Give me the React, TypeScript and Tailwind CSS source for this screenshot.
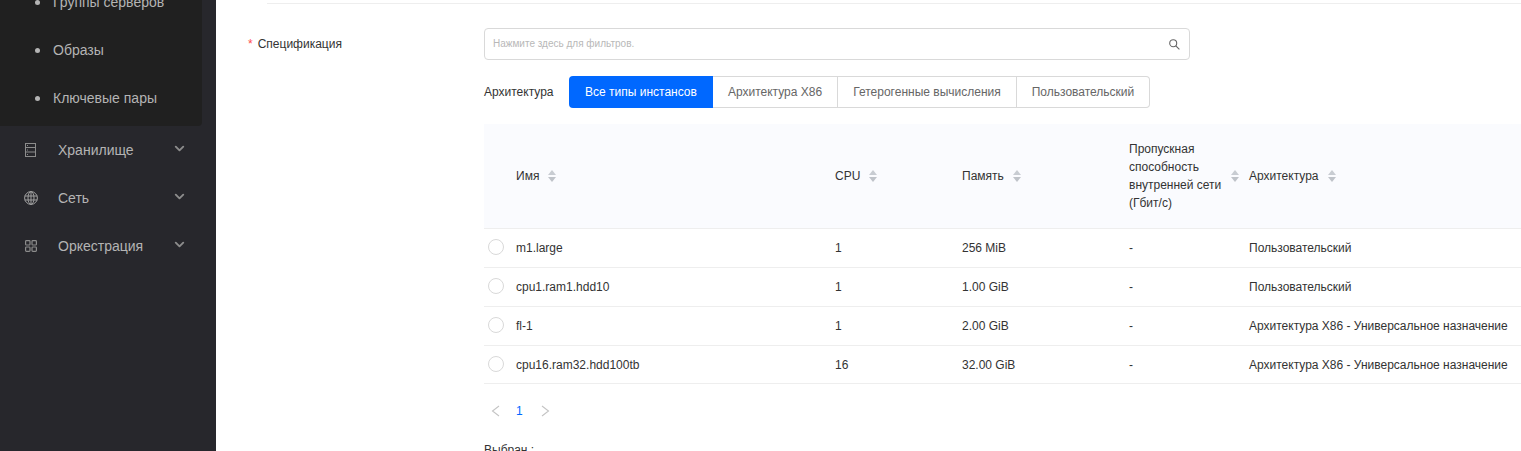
import { ChevronDown } from 'lucide-react';

const subItems = ['Группы серверов', 'Образы', 'Ключевые пары'];

const rows = [
  { name: 'm1.large', cpu: '1', mem: '256 MiB', net: '-', arch: 'Пользовательский', h: 'h-[39px]' },
  { name: 'cpu1.ram1.hdd10', cpu: '1', mem: '1.00 GiB', net: '-', arch: 'Пользовательский', h: 'h-[39px]' },
  { name: 'fl-1', cpu: '1', mem: '2.00 GiB', net: '-', arch: 'Архитектура X86 - Универсальное назначение', h: 'h-[39px]' },
  { name: 'cpu16.ram32.hdd100tb', cpu: '16', mem: '32.00 GiB', net: '-', arch: 'Архитектура X86 - Универсальное назначение', h: 'h-[38px]' },
];

const tabs = [
  { label: 'Архитектура X86', w: 'w-[125px]' },
  { label: 'Гетерогенные вычисления', w: 'w-[179px]' },
  { label: 'Пользовательский', w: 'w-[133px] rounded-r' },
];

function StorageIcon() {
  return (
    <svg width="14" height="14" viewBox="0 0 14 14" fill="none" stroke="#8c8c8c" strokeWidth="1">
      <rect x="1.5" y="0.5" width="10" height="13" />
      <path d="M1.5 4.5h10M1.5 9h10" />
      <path d="M3 2.5h1M3 7h1M3 11.5h1" />
    </svg>
  );
}

function GlobeIcon() {
  return (
    <svg width="14" height="14" viewBox="0 0 14 14" fill="none" stroke="#a0a0a0" strokeWidth="1">
      <circle cx="7" cy="7" r="6.4" />
      <ellipse cx="7" cy="7" rx="3" ry="6.4" />
      <path d="M7 0.6v12.8M0.8 5h12.4M0.8 9h12.4" />
    </svg>
  );
}

function GridIcon() {
  return (
    <svg width="14" height="14" viewBox="0 0 14 14" fill="none" stroke="#8c8c8c" strokeWidth="1.2">
      <rect x="1.6" y="1.6" width="4.4" height="4.4" rx="0.8" />
      <rect x="8" y="1.6" width="4.4" height="4.4" rx="0.8" />
      <rect x="1.6" y="8" width="4.4" height="4.4" rx="0.8" />
      <rect x="8" y="8" width="4.4" height="4.4" rx="0.8" />
    </svg>
  );
}

function SearchIcon() {
  return (
    <svg width="11" height="11" viewBox="0 0 11 11" fill="none" stroke="#666666" strokeWidth="1.1" className="shrink-0">
      <circle cx="4.2" cy="4.2" r="3.5" />
      <path d="M6.8 6.8l3.6 3.6" />
    </svg>
  );
}

function PageArrow({ dir }: { dir: 'left' | 'right' }) {
  return (
    <svg width="9" height="12" viewBox="0 0 9 12" fill="none" stroke="#c4c4c4" strokeWidth="1.1" className="shrink-0">
      <path d={dir === 'left' ? 'M8 1L1.5 6 8 11' : 'M1 1l6.5 5L1 11'} />
    </svg>
  );
}

function SortIcon() {
  return (
    <svg width="8" height="12" viewBox="0 0 8 12" className="shrink-0">
      <path d="M4 0l4 5H0z" fill="#c8ccd2" />
      <path d="M4 12L0 7h8z" fill="#bfc3c9" />
    </svg>
  );
}

function NavItem({ icon, label }: { icon: React.ReactNode; label: string }) {
  return (
    <div className="flex h-12 items-center text-sm text-[#b4b4b4]">
      <span className="w-[58px] pl-6">{icon}</span>
      <span className="flex-1">{label}</span>
      <ChevronDown className="mr-[29px] mb-1 h-[15px] w-[15px] text-[#8c8c8c]" strokeWidth={3} />
    </div>
  );
}

function HeaderCell({ label, className }: { label: string; className?: string }) {
  return (
    <div className={`flex items-center ${className ?? ''}`}>
      <span>{label}</span>
      <span className="ml-[9px]">
        <SortIcon />
      </span>
    </div>
  );
}

export default function App() {
  return (
    <div className="flex h-[451px] w-[1521px] overflow-hidden bg-white font-['Liberation_Sans',Arial,sans-serif] text-xs text-[#333333]">
      <aside className="h-full w-[216px] shrink-0 bg-[#27272c]">
        <div className="-mt-[22px] w-[202px] rounded-br bg-[#202020] pb-1">
          {subItems.map((item) => (
            <div key={item} className="flex h-12 items-center pl-[35px] text-sm text-[#b4b4b4]">
              <span className="mr-[13px] h-[5px] w-[5px] rounded-full bg-[#b4b4b4]" />
              {item}
            </div>
          ))}
        </div>
        <NavItem icon={<StorageIcon />} label="Хранилище" />
        <NavItem icon={<GlobeIcon />} label="Сеть" />
        <NavItem icon={<GridIcon />} label="Оркестрация" />
      </aside>

      <main className="min-w-0 flex-1">
        <div className="ml-[51px] mt-[3px] h-px bg-[#eeeeee]" />
        <div className="ml-[32px] mt-6 flex">
          <div className="flex h-8 w-[236px] shrink-0 items-center pb-[1px]">
            <span className="mr-[5px] text-[#ff4d4f]">*</span>
            <span>Спецификация</span>
          </div>

          <div className="min-w-0 flex-1">
            <div className="flex h-8 w-[706px] items-center justify-between rounded border border-[#d9d9d9] pl-2 pr-[9px] text-[10px] text-[#b8b8b8]">
              <span>Нажмите здесь для фильтров.</span>
              <SearchIcon />
            </div>

            <div className="mt-4 flex items-center">
              <span className="w-[85px]">Архитектура</span>
              <button className="flex h-8 w-[144px] items-center justify-center rounded-l bg-[#0068ff] text-white">
                Все типы инстансов
              </button>
              {tabs.map((tab) => (
                <button
                  key={tab.label}
                  className={`flex h-8 items-center justify-center border border-l-0 border-[#d9d9d9] text-[#666666] ${tab.w}`}
                >
                  {tab.label}
                </button>
              ))}
            </div>

            <div className="mt-4 grid h-[105px] grid-cols-[351px_127px_167px_120px_1fr] items-center border-b border-[#eeeeee] bg-[#fafbfe]">
              <HeaderCell label="Имя" className="pl-[32px]" />
              <HeaderCell label="CPU" />
              <HeaderCell label="Память" />
              <div className="flex items-center">
                <span className="w-[102px] leading-[18px]">Пропускная способность внутренней сети (Гбит/с)</span>
                <SortIcon />
              </div>
              <HeaderCell label="Архитектура" />
            </div>

            {rows.map((row) => (
              <div
                key={row.name}
                className={`grid grid-cols-[351px_127px_167px_120px_1fr] items-center border-b border-[#eeeeee] ${row.h}`}
              >
                <div className="flex items-center pl-1">
                  <span className="mr-3 -mt-[2px] h-4 w-4 rounded-full border border-[#d9d9d9]" />
                  {row.name}
                </div>
                <div>{row.cpu}</div>
                <div>{row.mem}</div>
                <div>{row.net}</div>
                <div className="whitespace-nowrap">{row.arch}</div>
              </div>
            ))}

            <div className="mt-[19px] flex h-[16px] items-center pl-[7px]">
              <PageArrow dir="left" />
              <span className="ml-4 text-[#0068ff]">1</span>
              <span className="ml-[18px]">
                <PageArrow dir="right" />
              </span>
            </div>

            <div className="mt-[23px]">Выбран :</div>
          </div>
        </div>
      </main>
    </div>
  );
}
